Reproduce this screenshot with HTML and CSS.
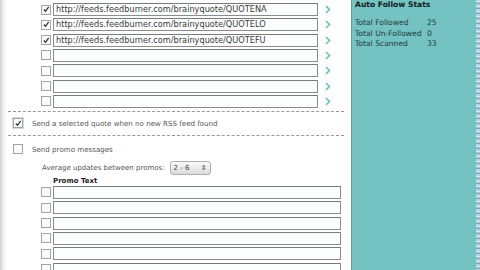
FILE: index.html
```html
<!DOCTYPE html>
<html lang="en">
<head>
<meta charset="UTF-8">
<title>Auto Follow Settings</title>
<link rel="stylesheet" href="styles.css">
</head>
<body>
<div class="pagina">
    <div class="principal">
        <div class="feeds">
            <div class="fila"><span class="caja marcada"><svg viewBox="0 0 9 9"><path d="M2 4.5 L4 6.5 L7.5 1.5" /></svg></span><div class="campo">http://feeds.feedburner.com/brainyquote/QUOTENA</div><svg class="flecha" viewBox="0 0 6 9"><path d="M1 1 L4.5 4.5 L1 8" /></svg></div>
            <div class="fila"><span class="caja marcada"><svg viewBox="0 0 9 9"><path d="M2 4.5 L4 6.5 L7.5 1.5" /></svg></span><div class="campo">http://feeds.feedburner.com/brainyquote/QUOTELO</div><svg class="flecha" viewBox="0 0 6 9"><path d="M1 1 L4.5 4.5 L1 8" /></svg></div>
            <div class="fila"><span class="caja marcada"><svg viewBox="0 0 9 9"><path d="M2 4.5 L4 6.5 L7.5 1.5" /></svg></span><div class="campo">http://feeds.feedburner.com/brainyquote/QUOTEFU</div><svg class="flecha" viewBox="0 0 6 9"><path d="M1 1 L4.5 4.5 L1 8" /></svg></div>
            <div class="fila"><span class="caja"></span><div class="campo"></div><svg class="flecha" viewBox="0 0 6 9"><path d="M1 1 L4.5 4.5 L1 8" /></svg></div>
            <div class="fila"><span class="caja"></span><div class="campo"></div><svg class="flecha" viewBox="0 0 6 9"><path d="M1 1 L4.5 4.5 L1 8" /></svg></div>
            <div class="fila"><span class="caja"></span><div class="campo"></div><svg class="flecha" viewBox="0 0 6 9"><path d="M1 1 L4.5 4.5 L1 8" /></svg></div>
            <div class="fila"><span class="caja"></span><div class="campo"></div><svg class="flecha" viewBox="0 0 6 9"><path d="M1 1 L4.5 4.5 L1 8" /></svg></div>
        </div>

        <div class="opcion opcion-linea">
            <span class="foco"><span class="caja marcada"><svg viewBox="0 0 9 9"><path d="M2 4.5 L4 6.5 L7.5 1.5" /></svg></span></span>
            <span>Send a selected quote when no new RSS feed found</span>
        </div>

        <div class="opcion">
            <span class="caja"></span>
            <span>Send promo messages</span>
        </div>
        <div class="promedio">
            <span>Average updates between promos:</span>
            <span class="selector">2 - 6<span class="flechas">&#8661;</span></span>
        </div>
        <div class="titulo-promo">Promo Text</div>
        <div class="promos">
            <div class="fila"><span class="caja"></span><div class="campo largo"></div></div>
            <div class="fila"><span class="caja"></span><div class="campo largo"></div></div>
            <div class="fila"><span class="caja"></span><div class="campo largo"></div></div>
            <div class="fila"><span class="caja"></span><div class="campo largo"></div></div>
            <div class="fila"><span class="caja"></span><div class="campo largo"></div></div>
            <div class="fila"><span class="caja"></span><div class="campo largo"></div></div>
        </div>
    </div>

    <div class="lateral">
        <div class="lateral-titulo">Auto Follow Stats</div>
        <div class="stat"><span>Total Followed</span><span>25</span></div>
        <div class="stat"><span>Total Un-Followed</span><span>0</span></div>
        <div class="stat"><span>Total Scanned</span><span>33</span></div>
    </div>
    <div class="borde"></div>
</div>
</body>
</html>
```

FILE: styles.css
```css
body, html {
    margin: 0;
    padding: 0;
    height: 100%;
    overflow: hidden;
    font-family: 'DejaVu Sans', Verdana, sans-serif;
    background-color: #ffffff;
    color: #444;
}
.pagina {
    display: flex;
    height: 270px;
}
.principal {
    width: 351px;
    flex-shrink: 0;
    background: linear-gradient(to right, #cfcfcf 0, #f4f4f4 4px, #ffffff 7px);
}
.feeds {
    padding: 3px 0 0 41px;
}
.fila {
    display: flex;
    align-items: center;
    height: 13px;
    margin-bottom: 2.33px;
}
.caja {
    width: 8px;
    height: 8px;
    border: 1px solid #a4a4a4;
    background: #fafafa;
    flex-shrink: 0;
    display: flex;
    align-items: center;
    justify-content: center;
}
.caja svg {
    width: 9px;
    height: 9px;
    fill: none;
    stroke: #333;
    stroke-width: 1.4;
}
.campo {
    margin-left: 2px;
    width: 261px;
    height: 11px;
    border: 1px solid #8c8c8c;
    border-top-color: #7a7a7a;
    background: #fcfefe;
    font-size: 8.2px;
    line-height: 11px;
    padding-left: 2px;
    color: #3a3a3a;
    white-space: nowrap;
    overflow: hidden;
}
.campo.largo {
    width: 284px;
}
.flecha {
    width: 6px;
    height: 9px;
    margin-left: 7px;
    fill: none;
    stroke: #6cbdbd;
    stroke-width: 1.6;
}
.opcion {
    display: flex;
    align-items: center;
    margin-left: 8px;
    padding: 0 0 0 5px;
    height: 23px;
    width: 331px;
    font-size: 7.1px;
    color: #555;
    gap: 9px;
}
.opcion-linea {
    border-top: 1px dashed #999;
    border-bottom: 1px dashed #999;
    margin-top: 3px;
    margin-bottom: 2px;
}
.foco {
    background: #c9ddec;
    padding: 1px;
    margin: -1px;
    display: flex;
}
.promedio {
    display: flex;
    align-items: center;
    margin-left: 42px;
    margin-top: 0;
    font-size: 7px;
    color: #555;
    gap: 5px;
    height: 14px;
}
.selector {
    display: inline-flex;
    align-items: center;
    justify-content: space-between;
    width: 33px;
    height: 12px;
    padding: 0 3px;
    border: 1px solid #b0b0b0;
    border-radius: 3px;
    background: linear-gradient(#fafafa, #dcdcdc);
    font-size: 7px;
    color: #444;
}
.flechas {
    font-size: 7px;
}
.titulo-promo {
    margin: 2px 0 0 53px;
    font-size: 7px;
    font-weight: bold;
    color: #222;
    height: 9px;
    line-height: 9px;
}
.promos {
    padding: 0 0 0 41px;
}
.lateral {
    width: 121px;
    flex-shrink: 0;
    background-color: #74c2c2;
    border-left: 1px solid #5e9f9f;
    padding-left: 3px;
    font-size: 7.6px;
    color: #1f3a3a;
}
.lateral-titulo {
    font-weight: bold;
    color: #102020;
    padding-top: 0;
    height: 18px;
    line-height: 9px;
}
.stat {
    display: flex;
    height: 10.5px;
    line-height: 10.5px;
}
.stat span:first-child {
    width: 72px;
}
.borde {
    flex: 1;
    background: repeating-linear-gradient(#9fc7d8 0, #e8f4f8 2px, #6a8fb0 3px, #d6e6ee 5px);
}
```
